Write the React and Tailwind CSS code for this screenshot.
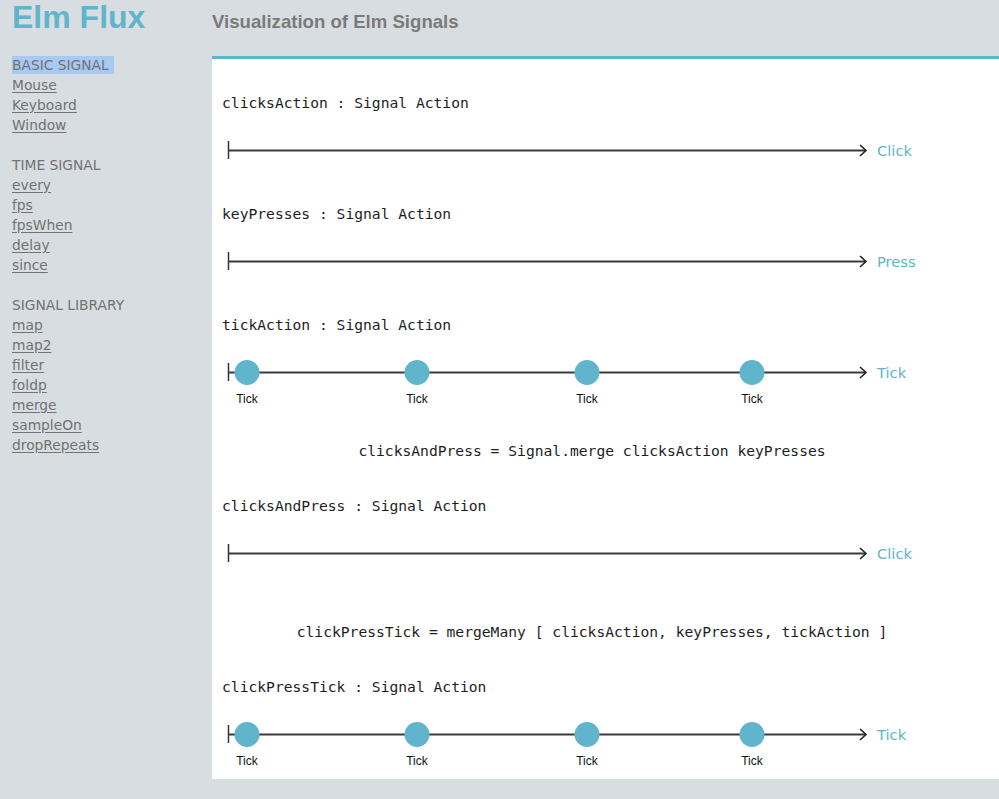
import React from "react";

const basic = ["Mouse", "Keyboard", "Window"];
const time = ["every", "fps", "fpsWhen", "delay", "since"];
const library = ["map", "map2", "filter", "foldp", "merge", "sampleOn", "dropRepeats"];

const TICKS = [25, 195, 365, 530];

function Timeline({ label, ticks }) {
  return (
    <div className="flex items-start h-[26px] overflow-visible">
      <svg width="650" height={ticks ? 50 : 26} className="block shrink-0 overflow-visible">
        <line x1="6.5" y1="4" x2="6.5" y2="22" stroke="#333" strokeWidth="1.5" />
        <line x1="6" y1="13.5" x2="643" y2="13.5" stroke="#3a3a3a" strokeWidth="2" />
        <polyline points="638,8 644,13.5 638,19" fill="none" stroke="#222" strokeWidth="1.6" />
        {ticks &&
          TICKS.map((x) => (
            <g key={x}>
              <circle cx={x} cy="13.5" r="12.5" fill="#60b5cc" />
              <text
                x={x}
                y="43.5"
                textAnchor="middle"
                fontSize="12"
                fill="#111"
                fontFamily="'Liberation Sans', Arial, sans-serif"
              >
                Tick
              </text>
            </g>
          ))}
      </svg>
      <span className="ml-[5px] leading-[27px] text-[14.7px] text-[#60b5cc] font-['DejaVu_Sans',sans-serif]">
        {label}
      </span>
    </div>
  );
}

function Code({ children, className = "" }) {
  return (
    <div className={`h-[20px] leading-[20px] text-[14.65px] text-[#1e1e1e] whitespace-pre font-['DejaVu_Sans_Mono',monospace] ${className}`}>
      {children}
    </div>
  );
}

function NavGroup({ title, items, active }) {
  return (
    <div className="mb-[20px]">
      <div className="h-[20px]">
        <span className={`inline-block h-[18px] leading-[18px] mt-[1px] pr-[5px] ${active ? "bg-[#a7c9f2]" : ""}`}>
          {title}
        </span>
      </div>
      {items.map((item) => (
        <div key={item} className="h-[20px] leading-[20px]">
          <a href="#" className="underline underline-offset-2">
            {item}
          </a>
        </div>
      ))}
    </div>
  );
}

export default function App() {
  return (
    <div className="min-h-screen bg-[#d8dde1] pb-[20px]">
      <header className="flex h-[56px]">
        <div className="w-[212px] shrink-0 pl-[12px] pt-[2px]">
          <h1 className="text-[32px] leading-[31px] font-bold text-[#60b5cc] font-['Liberation_Sans',Arial,sans-serif]">
            Elm Flux
          </h1>
        </div>
        <div className="pt-[13px] text-[18.6px] leading-[18px] font-bold text-[#7a7a7a] font-['Liberation_Sans',Arial,sans-serif]">
          Visualization of Elm Signals
        </div>
      </header>

      <div className="flex">
        <nav className="w-[212px] shrink-0 -mt-[1px] pl-[12px] text-[13.8px] text-[#727272] font-['DejaVu_Sans',sans-serif]">
          <NavGroup title="BASIC SIGNAL" items={basic} active />
          <NavGroup title="TIME SIGNAL" items={time} />
          <NavGroup title="SIGNAL LIBRARY" items={library} />
        </nav>

        <main className="flex-1 bg-white border-t-[3px] border-[#60b5cc] pl-[10px] pt-[34px] pb-[8px]">
          <div className="w-[740px]">
            <Code>clicksAction : Signal Action</Code>
            <div className="mt-[24px]">
              <Timeline label="Click" />
            </div>

            <Code className="mt-[41px]">keyPresses : Signal Action</Code>
            <div className="mt-[24px]">
              <Timeline label="Press" />
            </div>

            <Code className="mt-[41px]">tickAction : Signal Action</Code>
            <div className="mt-[24px] h-[50px]">
              <Timeline label="Tick" ticks />
            </div>

            <Code className="mt-[32px] text-center">clicksAndPress = Signal.merge clicksAction keyPresses</Code>

            <Code className="mt-[35px]">clicksAndPress : Signal Action</Code>
            <div className="mt-[24px]">
              <Timeline label="Click" />
            </div>

            <Code className="mt-[56px] text-center">clickPressTick = mergeMany [ clicksAction, keyPresses, tickAction ]</Code>

            <Code className="mt-[35px]">clickPressTick : Signal Action</Code>
            <div className="mt-[24px] h-[50px]">
              <Timeline label="Tick" ticks />
            </div>
          </div>
        </main>
      </div>
    </div>
  );
}
